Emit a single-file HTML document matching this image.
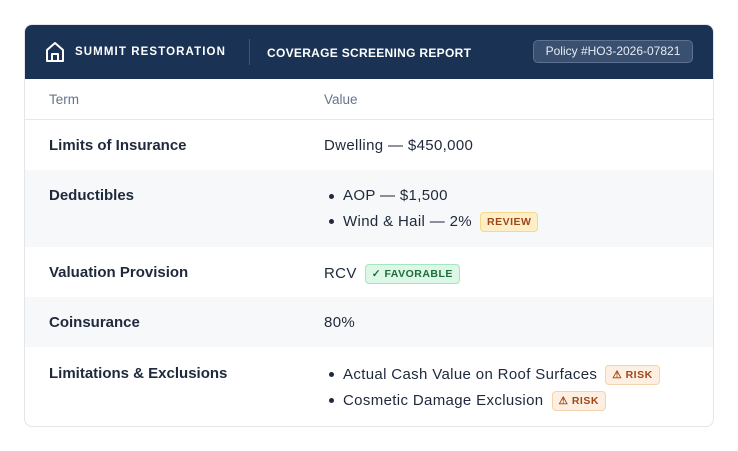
<!DOCTYPE html>
<html><head><style>
*{box-sizing:border-box;margin:0;padding:0}
body{width:738px;height:451px;background:#fff;font-family:"Liberation Sans",sans-serif;color:#1e293b;position:relative}
.card{position:absolute;left:24px;top:24px;width:690px;height:403px;border:1px solid #e2e5ea;border-radius:8px;overflow:hidden;background:#fff}
.hd{height:54px;background:#1a3254;position:relative;color:#fff}
.abs{position:absolute}
.brand{left:50px;top:21px;font-size:11.5px;font-weight:bold;letter-spacing:1.1px}
.sep{left:224px;top:14px;width:1px;height:26px;background:#3f5676}
.title{left:242px;top:21px;font-size:12px;font-weight:bold;letter-spacing:0.3px}
.pol{left:508px;top:15px;width:160px;height:23px;border:1px solid #5d7190;background:#3a5070;border-radius:5px;font-size:12px;text-align:center;line-height:21px;color:#e6ebf2}
.row{position:absolute;left:0;width:688px;font-size:15px;letter-spacing:0.35px}
.t{position:absolute;left:24px;font-weight:bold;color:#1e293b;letter-spacing:0}
.v{position:absolute;left:299px}
.gray{background:#f7f8fa}
.th{color:#64748b;font-size:13.5px;letter-spacing:0}
.b{position:absolute;left:302px;white-space:nowrap}
.b::before{content:"";position:absolute;left:2px;top:7px;width:5px;height:5px;border-radius:50%;background:#1e293b}
.b .x{margin-left:16px}
.bad{display:inline-block;font-size:10.5px;font-weight:bold;letter-spacing:0.5px;border-radius:4px;padding:0 6px;height:20px;line-height:18px;vertical-align:1px;margin-left:8px}
.rev{background:#fdf0c8;border:1px solid #f7d88a;color:#a0461a}
.fav{background:#dcf7e5;border:1px solid #a6e6bd;color:#1e6b3c}
.risk{background:#fdf0e2;border:1px solid #f6d3ab;color:#a0461a}
</style></head><body>
<div class="card">
 <div class="hd">
  <svg class="abs" style="left:20px;top:16px" width="20" height="22" viewBox="0 0 20 22"><path d="M2 9 L10 2 L18 9 V20 H2 Z M7 20 V13 H13 V20" fill="none" stroke="#fff" stroke-width="2" stroke-linejoin="round"/></svg>
  <div class="abs brand">SUMMIT RESTORATION</div>
  <div class="abs sep"></div>
  <div class="abs title">COVERAGE SCREENING REPORT</div>
  <div class="abs pol">Policy #HO3-2026-07821</div>
 </div>
 <div class="row th" style="top:54px;height:41px;border-bottom:1px solid #e6e8ec"><span class="abs" style="left:24px;top:13px">Term</span><span class="abs" style="left:299px;top:13px">Value</span></div>
 <div class="row" style="top:95px;height:50px"><span class="t" style="top:17px">Limits of Insurance</span><span class="v" style="top:17px">Dwelling — $450,000</span></div>
 <div class="row gray" style="top:145px;height:77px"><span class="t" style="top:17px">Deductibles</span>
  <div class="b" style="top:17px"><span class="x">AOP — $1,500</span></div>
  <div class="b" style="top:42px"><span class="x">Wind &amp; Hail — 2%</span><span class="bad rev">REVIEW</span></div></div>
 <div class="row" style="top:222px;height:50px"><span class="t" style="top:17px">Valuation Provision</span><span class="v" style="top:17px">RCV<span class="bad fav">✓ FAVORABLE</span></span></div>
 <div class="row gray" style="top:272px;height:50px"><span class="t" style="top:17px">Coinsurance</span><span class="v" style="top:17px">80%</span></div>
 <div class="row" style="top:322px;height:80px"><span class="t" style="top:18px">Limitations &amp; Exclusions</span>
  <div class="b" style="top:18px"><span class="x">Actual Cash Value on Roof Surfaces</span><span class="bad risk">⚠ RISK</span></div>
  <div class="b" style="top:44px"><span class="x">Cosmetic Damage Exclusion</span><span class="bad risk">⚠ RISK</span></div></div>
</div>
</body></html>
